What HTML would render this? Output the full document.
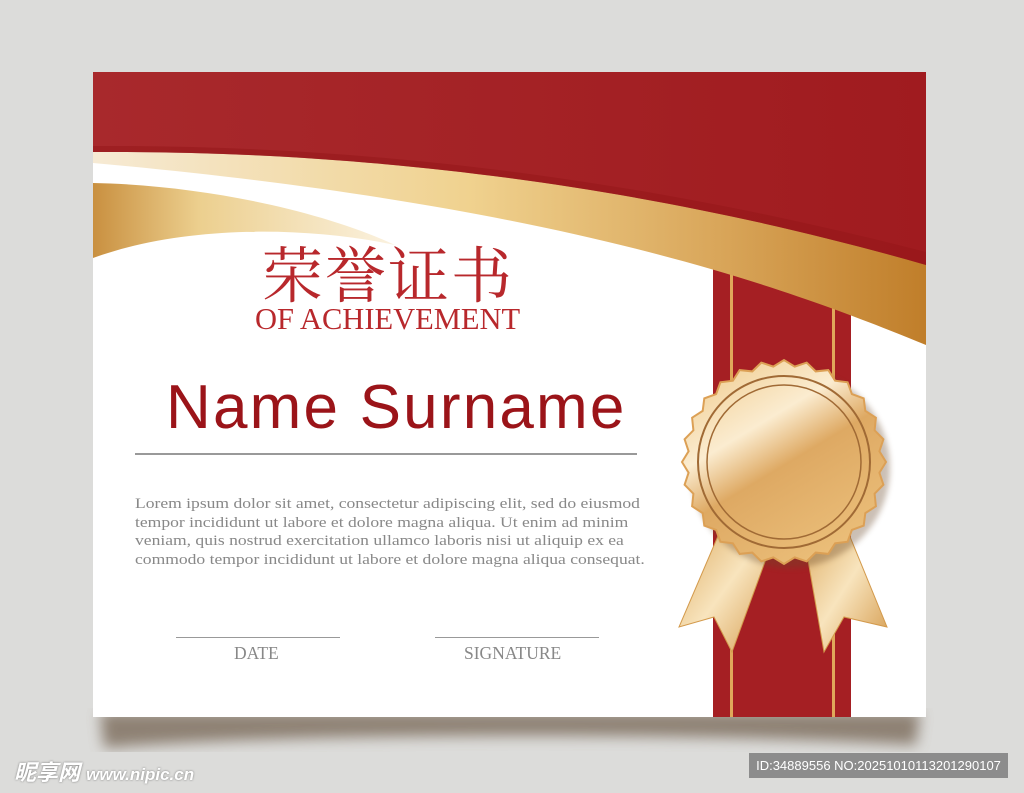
<!DOCTYPE html>
<html><head><meta charset="utf-8"><style>
body{margin:0;width:1024px;height:793px;background:#dcdcda;overflow:hidden;position:relative;font-family:"Liberation Sans",sans-serif}
.t{position:absolute;white-space:nowrap}
</style></head><body>
<svg width="1024" height="793" style="position:absolute;left:0;top:0">
<defs>
<linearGradient id="red" x1="0" y1="0" x2="1" y2="0"><stop offset="0" stop-color="#a8292c"/><stop offset="1" stop-color="#a01b1f"/></linearGradient>
<linearGradient id="gold" x1="0" y1="0" x2="1" y2="0"><stop offset="0" stop-color="#f6ead4"/><stop offset="0.45" stop-color="#f0d28f"/><stop offset="0.75" stop-color="#d9a65a"/><stop offset="1" stop-color="#c07e2a"/></linearGradient>
<linearGradient id="gold2" x1="0" y1="0" x2="1" y2="0"><stop offset="0" stop-color="#c99040"/><stop offset="0.35" stop-color="#eccf8e"/><stop offset="1" stop-color="#fbf2e0"/></linearGradient>
<linearGradient id="medal" x1="0" y1="0" x2="0.6" y2="1"><stop offset="0" stop-color="#eec784"/><stop offset="0.4" stop-color="#fbecd0"/><stop offset="0.6" stop-color="#dea963"/><stop offset="1" stop-color="#eabd78"/></linearGradient>
<linearGradient id="tail" x1="0" y1="0" x2="1" y2="1"><stop offset="0" stop-color="#dcaa60"/><stop offset="0.5" stop-color="#f8e4bd"/><stop offset="1" stop-color="#d49a4c"/></linearGradient>
<filter id="b"><feGaussianBlur stdDeviation="7"/></filter>
<filter id="b2"><feGaussianBlur stdDeviation="3"/></filter>
</defs>
<path d="M100,712 H920 L916,745 C700,732 300,732 104,748 Z" fill="#7a6a5a" filter="url(#b)" opacity="0.8"/>
<rect x="93" y="72" width="833" height="645" fill="#fff"/>
<rect x="713" y="250" width="138" height="467" fill="#a51f23"/>
<rect x="730" y="250" width="3" height="467" fill="#e0a75a"/>
<rect x="832" y="250" width="3" height="467" fill="#e0a75a"/>
<path d="M93,183 C200,185 320,210 395,245 C300,225 180,226 93,258 Z" fill="url(#gold2)"/>
<path d="M93,146 C420,144 700,196 926,255 V345 C780,285 560,205 93,163 Z" fill="url(#gold)"/>
<path d="M93,72 H926 V265 C700,200 420,150 93,152 Z" fill="url(#red)"/>
<path d="M93,146 C420,144 700,194 926,252 V265 C700,200 420,150 93,152 Z" fill="#941518" opacity="0.5"/>
<g transform="translate(784,462)">
<path d="M-60,60 L-105,165 L-70,155 L-52,190 L-10,75 Z" fill="url(#tail)" stroke="#d39a4c"/>
<path d="M20,75 L40,190 L60,155 L103,165 L60,60 Z" fill="url(#tail)" stroke="#d39a4c"/>
<g filter="url(#b2)" opacity="0.35"><circle cx="6" cy="6" r="100" fill="#6a4a2a"/></g>
<path id="sc" fill="url(#medal)" stroke="#dca055" stroke-width="2" d=""/>
<circle r="86" fill="none" stroke="#a06a35" stroke-width="2"/>
<circle r="77" fill="none" stroke="#a06a35" stroke-width="1.5"/>
</g>
</svg>
<script>
(function(){var n=28,d="";for(var i=0;i<=n*2;i++){var a=i*Math.PI/n,r=i%2?96:102;d+=(i?"L":"M")+(r*Math.cos(a)).toFixed(1)+","+(r*Math.sin(a)).toFixed(1);}document.getElementById("sc").setAttribute("d",d+"Z");})();
</script>
<div class="t" style="left:262px;top:228px;font-size:61px;color:#b8282c;font-family:'Noto Serif CJK SC',serif;letter-spacing:2px">荣誉证书</div>
<div class="t" style="left:255px;top:302px;font-size:30.5px;color:#b8282c;font-family:'Liberation Serif',serif">OF ACHIEVEMENT</div>
<div class="t" style="left:166px;top:372px;font-size:62px;color:#9b1419;letter-spacing:2.2px">Name Surname</div>
<div style="position:absolute;left:135px;top:453px;width:502px;height:2px;background:#999"></div>
<div class="t" style="left:135px;top:495px;font-size:15px;line-height:18.5px;color:#888;font-family:'Liberation Serif',serif;transform:scaleX(1.17);transform-origin:left">Lorem ipsum dolor sit amet, consectetur adipiscing elit, sed do eiusmod<br>tempor incididunt ut labore et dolore magna aliqua. Ut enim ad minim<br>veniam, quis nostrud exercitation ullamco laboris nisi ut aliquip ex ea<br>commodo tempor incididunt ut labore et dolore magna aliqua consequat.</div>
<div style="position:absolute;left:176px;top:637px;width:164px;height:1px;background:#999"></div>
<div style="position:absolute;left:435px;top:637px;width:164px;height:1px;background:#999"></div>
<div class="t" style="left:234px;top:643px;font-size:17.5px;color:#888;font-family:'Liberation Serif',serif">DATE</div>
<div class="t" style="left:464px;top:643px;font-size:17.5px;color:#888;font-family:'Liberation Serif',serif">SIGNATURE</div>
<div class="t" style="left:14px;top:755px;font-size:22px;color:#fff;font-weight:bold;font-style:italic;font-family:'Liberation Sans','Noto Sans CJK SC',sans-serif;text-shadow:0 0 2px #777">昵享网 <span style="font-size:17px">www.nipic.cn</span></div>
<div class="t" style="left:749px;top:753px;width:259px;height:25px;background:#8c8c8c;color:#fff;font-size:13px;line-height:25px;text-align:center">ID:34889556 NO:20251010113201290107</div>
</body></html>
